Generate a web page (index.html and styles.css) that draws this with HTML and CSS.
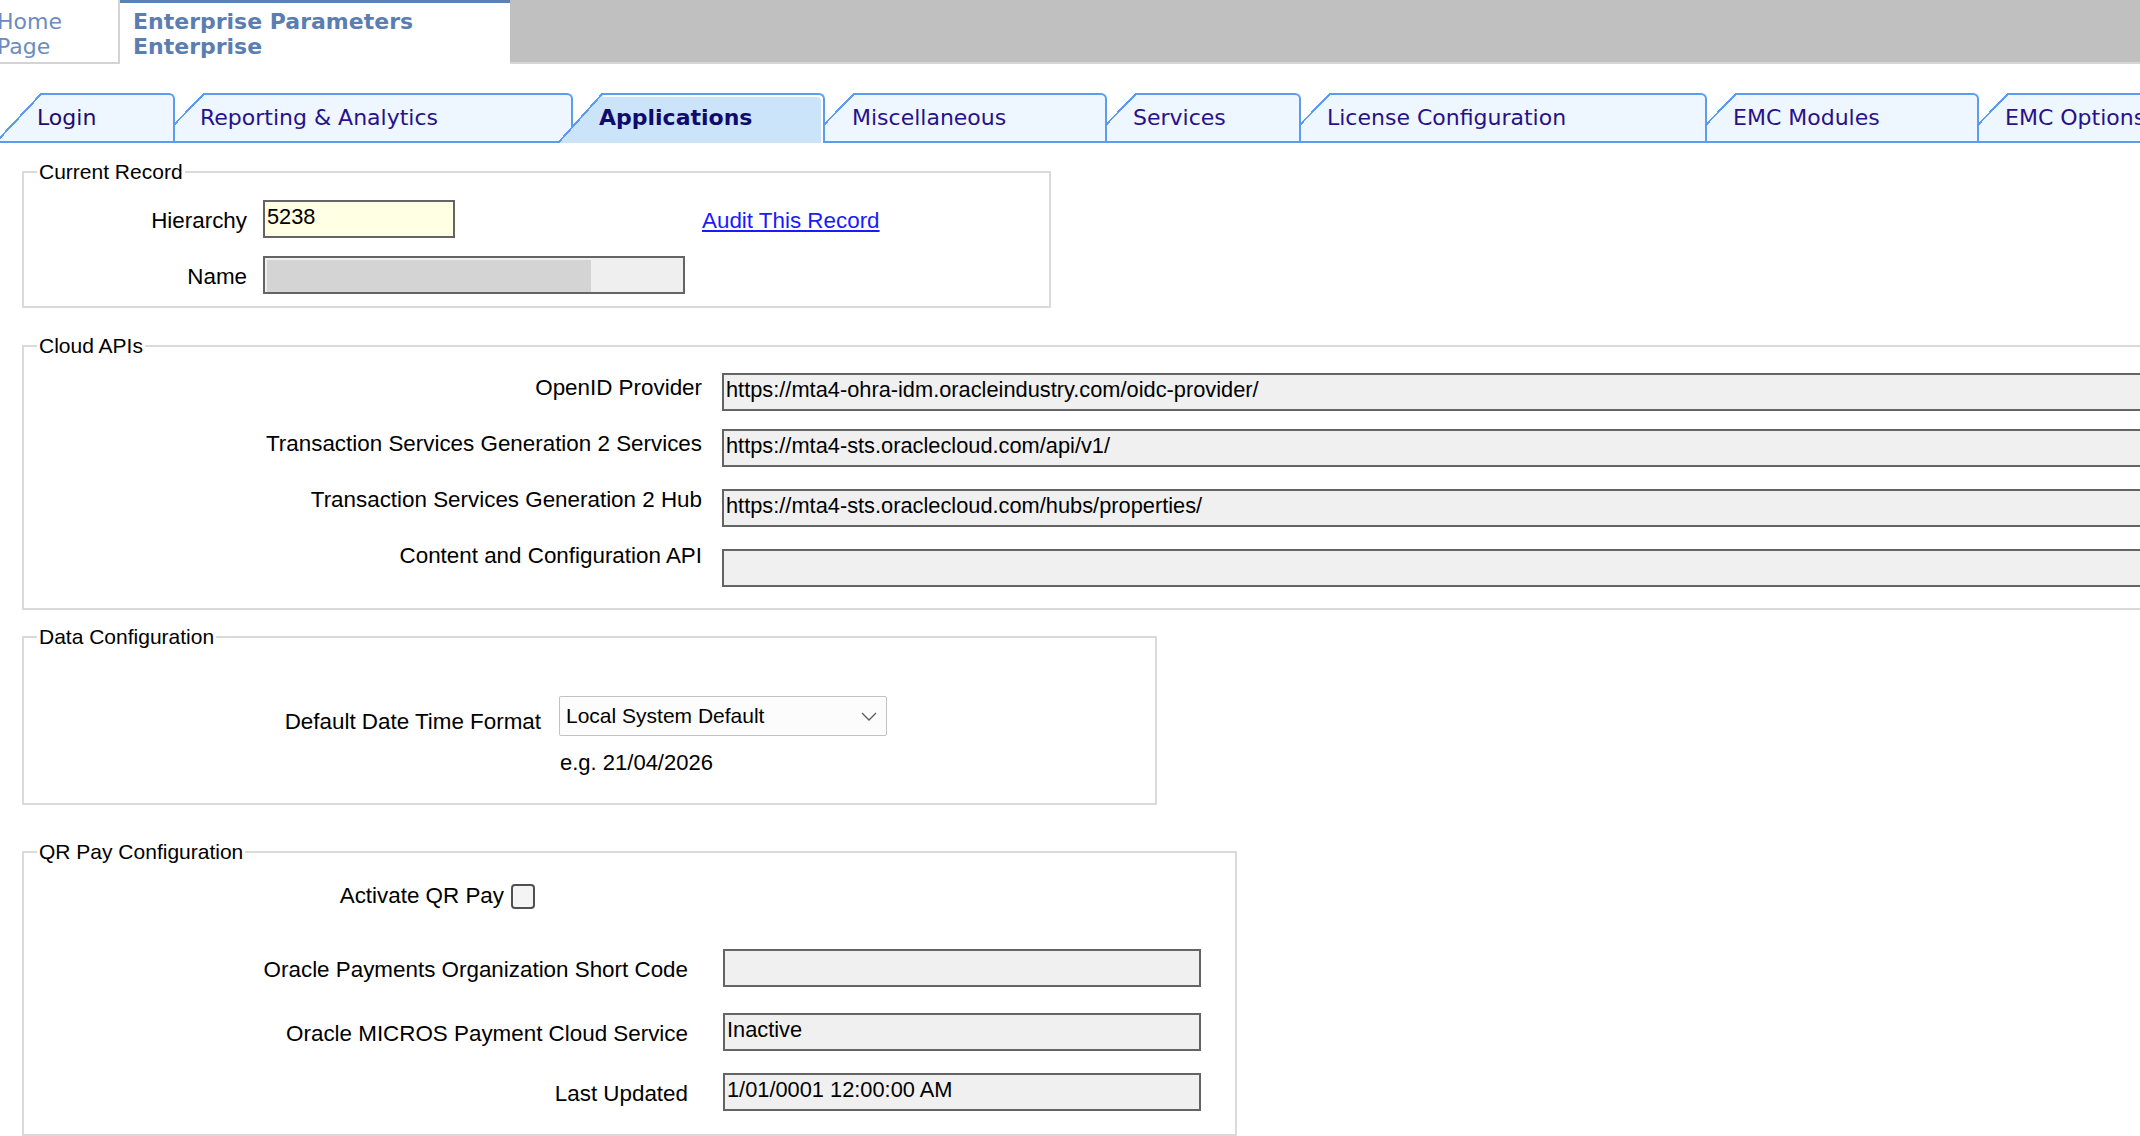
FILE: index.html
```html
<!DOCTYPE html>
<html lang="en">
<head>
<meta charset="utf-8">
<title>Enterprise Parameters</title>
<link rel="stylesheet" href="styles.css">
</head>
<body>
<header class="topbar">
  <div class="home-tab"><div class="home-text">Home<br>Page</div></div>
  <div class="ent-tab">Enterprise Parameters<br>Enterprise</div>
  <div class="topbar-fill"></div>
</header>

<nav class="tabs">
  <div class="tab tab-login"><span>Login</span></div>
  <div class="tab tab-reporting"><span>Reporting &amp; Analytics</span></div>
  <div class="tab tab-apps active"><span>Applications</span></div>
  <div class="tab tab-misc"><span>Miscellaneous</span></div>
  <div class="tab tab-services"><span>Services</span></div>
  <div class="tab tab-license"><span>License Configuration</span></div>
  <div class="tab tab-emcmod"><span>EMC Modules</span></div>
  <div class="tab tab-emcopt"><span>EMC Options</span></div>
</nav>

<main class="content">
  <fieldset class="group group-record">
    <legend>Current Record</legend>
    <div class="row row-record first-hier">
      <label class="lbl lbl-record">Hierarchy</label>
      <div class="field field-hier">5238</div>
      <a class="audit" href="#">Audit This Record</a>
    </div>
    <div class="row row-record second-name">
      <label class="lbl lbl-record">Name</label>
      <div class="field field-name"><div class="name-mask"></div></div>
    </div>
  </fieldset>

  <fieldset class="group group-cloud">
    <legend>Cloud APIs</legend>
    <div class="row row-cloud c1">
      <label class="lbl lbl-cloud n2">OpenID Provider</label>
      <div class="field field-wide">https://mta4-ohra-idm.oracleindustry.com/oidc-provider/</div>
    </div>
    <div class="row row-cloud c2">
      <label class="lbl lbl-cloud n2">Transaction Services Generation 2 Services</label>
      <div class="field field-wide">https://mta4-sts.oraclecloud.com/api/v1/</div>
    </div>
    <div class="row row-cloud c3">
      <label class="lbl lbl-cloud nm2">Transaction Services Generation 2 Hub</label>
      <div class="field field-wide">https://mta4-sts.oraclecloud.com/hubs/properties/</div>
    </div>
    <div class="row row-cloud c4">
      <label class="lbl lbl-cloud nm6">Content and Configuration API</label>
      <div class="field field-wide"></div>
    </div>
  </fieldset>

  <fieldset class="group group-data">
    <legend>Data Configuration</legend>
    <div class="row row-data">
      <label class="lbl lbl-data">Default Date Time Format</label>
      <div class="select">
        <span>Local System Default</span>
        <svg class="chev" width="16" height="9" viewBox="0 0 16 9"><polyline points="1,1 8,8 15,1" fill="none" stroke="#5a5a5a" stroke-width="1.3"/></svg>
      </div>
    </div>
    <div class="hint">e.g. 21/04/2026</div>
  </fieldset>

  <fieldset class="group group-qr">
    <legend>QR Pay Configuration</legend>
    <div class="row row-activate">
      <label class="lbl lbl-act">Activate QR Pay</label>
      <div class="check"></div>
    </div>
    <div class="row row-qr q1">
      <label class="lbl lbl-qr">Oracle Payments Organization Short Code</label>
      <div class="field field-qr"></div>
    </div>
    <div class="row row-qr q2">
      <label class="lbl lbl-qr">Oracle MICROS Payment Cloud Service</label>
      <div class="field field-qr">Inactive</div>
    </div>
    <div class="row row-qr q3">
      <label class="lbl lbl-qr">Last Updated</label>
      <div class="field field-qr">1/01/0001 12:00:00 AM</div>
    </div>
  </fieldset>
</main>
</body>
</html>
```

FILE: styles.css
```css
html, body {
  margin: 0;
  padding: 0;
  overflow: hidden;
  background: #ffffff;
}
body {
  width: 2140px;
  height: 1136px;
  font-family: "Liberation Sans", Arial, sans-serif;
  font-size: 22px;
  color: #000;
}

/* ---------- top bar ---------- */
.topbar {
  display: flex;
  height: 64px;
}
.home-tab {
  box-sizing: border-box;
  width: 120px;
  height: 64px;
  border-right: 2px solid #d3d3d3;
  border-bottom: 2px solid #d3d3d3;
  padding-top: 9px;
  font-family: "DejaVu Sans", Verdana, sans-serif;
  font-size: 22px;
  line-height: 25px;
  color: #6b8cbf;
  overflow: hidden;
}
.home-text {
  margin-left: -3px;
}
.ent-tab {
  box-sizing: border-box;
  width: 390px;
  height: 64px;
  border-top: 3px solid #5b82b5;
  padding: 6px 0 0 13px;
  font-family: "DejaVu Sans", Verdana, sans-serif;
  font-weight: bold;
  font-size: 22px;
  line-height: 25px;
  color: #5a7eb2;
}
.topbar-fill {
  flex: 1;
  box-sizing: border-box;
  height: 64px;
  background: #c0c0c0;
  border-bottom: 2px solid #d6d6d6;
}

/* ---------- tab strip ---------- */
.tabs {
  display: flex;
  align-items: flex-start;
  margin-top: 29px;
  height: 48px;
  border-bottom: 2px solid #5b9cf0;
}
.tab {
  position: relative;
  flex: none;
  box-sizing: border-box;
  height: 48px;
  border-top: 2px solid #5b9cf0;
  border-right: 2px solid #5b9cf0;
  border-top-right-radius: 6px;
  background: #eef6ff;
  font-family: "DejaVu Sans", Verdana, sans-serif;
  font-size: 22px;
  line-height: 46px;
  color: #28118a;
  white-space: nowrap;
  padding-left: 26px;
}
.tab > span {
  position: relative;
  z-index: 1;
}
.tab::before {
  content: "";
  position: absolute;
  left: 0;
  top: -2px;
  width: 30px;
  height: 31px;
  background: #fff;
  clip-path: polygon(0 0, 100% 0, 0 100%);
}
.tab::after {
  content: "";
  position: absolute;
  left: -17px;
  top: -2px;
  width: 47px;
  height: 48px;
  background: linear-gradient(to bottom right,
    transparent calc(50% - 1px),
    #5b9cf0 calc(50% - 1px),
    #5b9cf0 calc(50% + 1px),
    #eef6ff calc(50% + 1px));
}

.tab-login { width: 175px; padding-left: 37px; z-index: 9; color: #220a70; }
.tab-login::before { width: 42px; height: 45px; }
.tab-login::after { left: -3px; width: 45px; }

.tab-reporting { width: 398px; padding-left: 25px; z-index: 8; }
.tab-apps { width: 252px; padding-left: 26px; z-index: 10; }
.tab-misc { width: 282px; padding-left: 27px; z-index: 6; }
.tab-services { width: 194px; padding-left: 26px; z-index: 5; }
.tab-license { width: 406px; padding-left: 26px; z-index: 4; }
.tab-emcmod { width: 272px; padding-left: 26px; z-index: 3; }
.tab-emcopt { width: 260px; padding-left: 26px; z-index: 2; }

.tab.active {
  height: 50px;
  background: #cce4fa;
  box-shadow: inset -2px 2px 0 #ffffff;
  font-weight: bold;
  color: #100a6e;
}
.tab.active::before {
  width: 30px;
  height: 33px;
}
.tab.active::after {
  left: -15px;
  width: 45px;
  height: 50px;
  background: linear-gradient(to bottom right,
    transparent calc(50% - 1px),
    #5b9cf0 calc(50% - 1px),
    #5b9cf0 calc(50% + 1px),
    #cce4fa calc(50% + 1px));
}

/* ---------- content groups ---------- */
.content {
  padding-left: 22px;
}
.group {
  box-sizing: border-box;
  margin: 0;
  padding: 0;
  min-width: 0;
  border: 2px solid #dadada;
}
.group legend {
  margin-left: 13px;
  padding: 0 2px;
  font-size: 21px;
  line-height: 24px;
}
.group-record { width: 1029px; margin-top: 17px; padding-bottom: 12px; }
.group-cloud  { width: 2170px; margin-top: 26px; padding-bottom: 21px; }
.group-data   { width: 1135px; margin-top: 15px; padding-bottom: 27px; }
.group-qr     { width: 1215px; margin-top: 35px; padding-bottom: 23px; }

.row {
  display: flex;
  align-items: flex-start;
}
.lbl {
  flex: none;
  box-sizing: border-box;
  text-align: right;
  font-size: 22.4px;
  line-height: 26px;
  margin-top: 8px;
  white-space: nowrap;
}

.field {
  box-sizing: border-box;
  height: 38px;
  border: 2px solid #646464;
  background: #f0f0f0;
  padding: 2px 2px 0;
  font-size: 21.8px;
  line-height: 26px;
  white-space: nowrap;
  overflow: hidden;
}

/* current record */
.row-record { gap: 16px; }
.first-hier { margin-top: 16px; }
.second-name { margin-top: 18px; }
.lbl-record { width: 223px; }
.field-hier {
  width: 192px;
  background: #ffffe4;
}
.field-name {
  width: 422px;
  padding: 0;
  background: #efefef;
}
.name-mask {
  margin: 2px 0 0 2px;
  width: 324px;
  height: 32px;
  background: #d4d4d4;
}
.audit {
  margin-left: 231px;
  margin-top: 8px;
  font-size: 22.4px;
  line-height: 26px;
  color: #1a1aff;
  text-decoration: underline;
}

/* cloud apis */
.row-cloud { gap: 20px; }
.lbl-cloud { width: 678px; }
.field-wide { flex: 1; }
.c1 { margin-top: 15px; }
.c2 { margin-top: 18px; }
.c3 { margin-top: 22px; }
.c4 { margin-top: 22px; }
.n2 { margin-top: 2px; }
.nm2 { margin-top: -2px; }
.nm6 { margin-top: -6px; }

/* data configuration */
.row-data {
  gap: 18px;
  margin-top: 47px;
}
.lbl-data { width: 517px; margin-top: 13px; }
.select {
  box-sizing: border-box;
  width: 328px;
  height: 40px;
  border: 1px solid #c2c2c2;
  border-radius: 2px;
  background: #fcfcfc;
  display: flex;
  align-items: center;
  justify-content: space-between;
  padding: 0 9px 0 6px;
  font-size: 21px;
  line-height: 26px;
}
.chev { display: block; }
.hint {
  margin: 14px 0 0 536px;
  line-height: 26px;
}

/* qr pay */
.row-activate {
  align-items: center;
  gap: 7px;
  margin-top: 19px;
}
.lbl-act { width: 480px; margin-top: 0; }
.check {
  box-sizing: border-box;
  width: 24px;
  height: 25px;
  border: 2px solid #505050;
  border-radius: 4px;
  background: #f4f4f4;
}
.row-qr { gap: 35px; }
.lbl-qr { width: 664px; }
.field-qr { width: 478px; }
.q1 { margin-top: 40px; }
.q2 { margin-top: 26px; }
.q3 { margin-top: 22px; }
```
